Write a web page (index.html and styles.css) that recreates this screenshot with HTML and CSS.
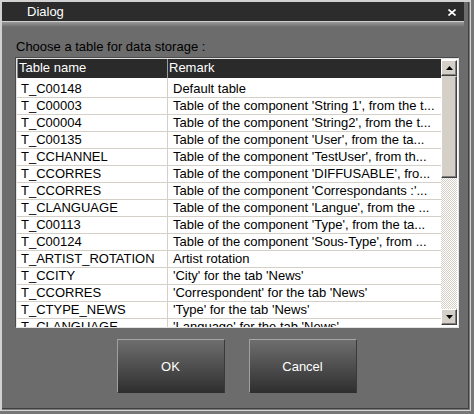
FILE: index.html
```html
<!DOCTYPE html>
<html>
<head>
<meta charset="utf-8">
<link rel="stylesheet" href="styles.css">
</head>
<body>
<div class="window">
  <div class="titlebar">
    <span class="title">Dialog</span>
    <svg class="close" width="8" height="7" viewBox="0 0 8 7"><path d="M0.5 0.5 L7.5 6.5 M7.5 0.5 L0.5 6.5" stroke="#fff" stroke-width="1.6" fill="none"/></svg>
  </div>
  <div class="glow"></div>
  <div class="content">
    <div class="label">Choose a table for data storage :</div>
    <div class="table">
      <div class="grid">
        <div class="head">
          <div class="hc name">Table name</div>
          <div class="hc remark">Remark</div>
        </div>
        <div class="rows">
          <div class="row"><div class="c name">T_C00148</div><div class="c remark">Default table</div></div>
          <div class="row"><div class="c name">T_C00003</div><div class="c remark">Table of the component 'String 1', from the t...</div></div>
          <div class="row"><div class="c name">T_C00004</div><div class="c remark">Table of the component 'String2', from the t...</div></div>
          <div class="row"><div class="c name">T_C00135</div><div class="c remark">Table of the component 'User', from the ta...</div></div>
          <div class="row"><div class="c name">T_CCHANNEL</div><div class="c remark">Table of the component 'TestUser', from th...</div></div>
          <div class="row"><div class="c name">T_CCORRES</div><div class="c remark">Table of the component 'DIFFUSABLE', fro...</div></div>
          <div class="row"><div class="c name">T_CCORRES</div><div class="c remark">Table of the component 'Correspondants :'...</div></div>
          <div class="row"><div class="c name">T_CLANGUAGE</div><div class="c remark">Table of the component 'Langue', from the ...</div></div>
          <div class="row"><div class="c name">T_C00113</div><div class="c remark">Table of the component 'Type', from the ta...</div></div>
          <div class="row"><div class="c name">T_C00124</div><div class="c remark">Table of the component 'Sous-Type', from ...</div></div>
          <div class="row"><div class="c name">T_ARTIST_ROTATION</div><div class="c remark">Artist rotation</div></div>
          <div class="row"><div class="c name">T_CCITY</div><div class="c remark">'City' for the tab 'News'</div></div>
          <div class="row"><div class="c name">T_CCORRES</div><div class="c remark">'Correspondent' for the tab 'News'</div></div>
          <div class="row"><div class="c name">T_CTYPE_NEWS</div><div class="c remark">'Type' for the tab 'News'</div></div>
          <div class="row"><div class="c name">T_CLANGUAGE</div><div class="c remark">'Language' for the tab 'News'</div></div>
        </div>
      </div>
      <div class="sb">
        <div class="sbtn"><svg width="7" height="4" viewBox="0 0 7 4"><polygon points="0,4 7,4 3.5,0" fill="#000"/></svg></div>
        <div class="thumb"></div>
        <div class="track"></div>
        <div class="sbtn"><svg width="7" height="4" viewBox="0 0 7 4"><polygon points="0,0 7,0 3.5,4" fill="#000"/></svg></div>
      </div>
    </div>
    <div class="buttons">
      <div class="btn">OK</div>
      <div class="btn">Cancel</div>
    </div>
  </div>
</div>
</body>
</html>
```

FILE: styles.css
```css
html, body {
  margin: 0;
  padding: 0;
  background: #777777;
  width: 474px;
  height: 414px;
  overflow: hidden;
  font-family: "Liberation Sans", Arial, sans-serif;
  font-size: 13px;
}

.window {
  box-sizing: border-box;
  width: 471px;
  height: 411px;
  border: 1px solid #d2d2d2;
  border-left-width: 2px;
  border-top-width: 2px;
  background: #6c6c6c;
  box-shadow: inset -1px -1px 0 #7c7c7c, inset -2px -2px 0 #3e3e3e;
  display: flex;
  flex-direction: column;
}

.titlebar {
  height: 19px;
  margin-right: 6px;
  background: #2c2c2c;
  border-bottom: 1px solid #cfcfcf;
  display: flex;
  align-items: center;
  justify-content: space-between;
  padding: 0 8px 0 25px;
}

.title {
  color: #ffffff;
  font-size: 13px;
  line-height: 18px;
}

.close {
  display: block;
  margin-top: 1px;
}

.glow {
  height: 5px;
  margin-right: 6px;
  background: linear-gradient(#9a9a9a, #6c6c6c);
}

.content {
  padding-left: 14px;
  display: flex;
  flex-direction: column;
}

.label {
  margin-top: 12px;
  line-height: 15px;
  color: #000;
  padding-left: 0;
}

.table {
  margin-top: 4px;
  box-sizing: border-box;
  width: 443px;
  height: 270px;
  border: 1px solid #e4e4e4;
  background: #ffffff;
  box-shadow: -1px -1px 0 #4a4a4a;
  display: flex;
  overflow: hidden;
}

.grid {
  flex: 1;
  display: flex;
  flex-direction: column;
  overflow: hidden;
}

.head {
  display: flex;
  height: 19px;
  background: #2a2a2a;
  color: #ffffff;
  border-left: 1px solid #8c8c8c;
  box-sizing: border-box;
  flex-shrink: 0;
}

.hc {
  line-height: 17px;
  white-space: nowrap;
}

.hc.name {
  width: 149px;
  padding-left: 1px;
  box-sizing: border-box;
}

.hc.remark {
  border-left: 1px solid #9c9c9c;
  padding-left: 1px;
}

.rows {
  padding-top: 3px;
  background: linear-gradient(#d4d0c8, #d4d0c8) 150px 0 / 1px 100% no-repeat, #ffffff;
}

.row {
  display: flex;
  height: 17px;
  box-sizing: border-box;
  border-bottom: 1px solid #d4d0c8;
  color: #000;
}

.c {
  line-height: 15px;
  white-space: nowrap;
  overflow: hidden;
}

.c.name {
  width: 150px;
  padding-left: 4px;
  box-sizing: border-box;
}

.c.remark {
  flex: 1;
  border-left: 1px solid #d4d0c8;
  padding-left: 5px;
}

.sb {
  width: 16px;
  margin: 1px 1px 2px 0;
  display: flex;
  flex-direction: column;
  background: repeating-conic-gradient(#d4d0c8 0% 25%, #ffffff 0% 50%) 0 0 / 2px 2px;
}

.sbtn, .thumb {
  box-sizing: border-box;
  background: #d4d0c8;
  border: 1px solid;
  border-color: #ffffff #404040 #404040 #ffffff;
  box-shadow: inset -1px -1px 0 #808080;
}

.sbtn {
  height: 16px;
  display: flex;
  align-items: center;
  justify-content: center;
  flex-shrink: 0;
}

.thumb {
  height: 102px;
  border-color: #d4d0c8 #404040 #404040 #ffffff;
  flex-shrink: 0;
}

.track {
  flex: 1;
}

.buttons {
  margin-top: 11px;
  margin-left: -13px;
  display: flex;
  justify-content: center;
  gap: 24px;
}

.btn {
  box-sizing: border-box;
  width: 108px;
  height: 54px;
  border: 1px solid;
  border-color: #a6a6a6 #3a3a3a #2e2e2e #a0a0a0;
  background: linear-gradient(#6e6e6e, #2f2f2f);
  color: #ffffff;
  font-size: 13px;
  display: flex;
  align-items: center;
  justify-content: center;
}
```
